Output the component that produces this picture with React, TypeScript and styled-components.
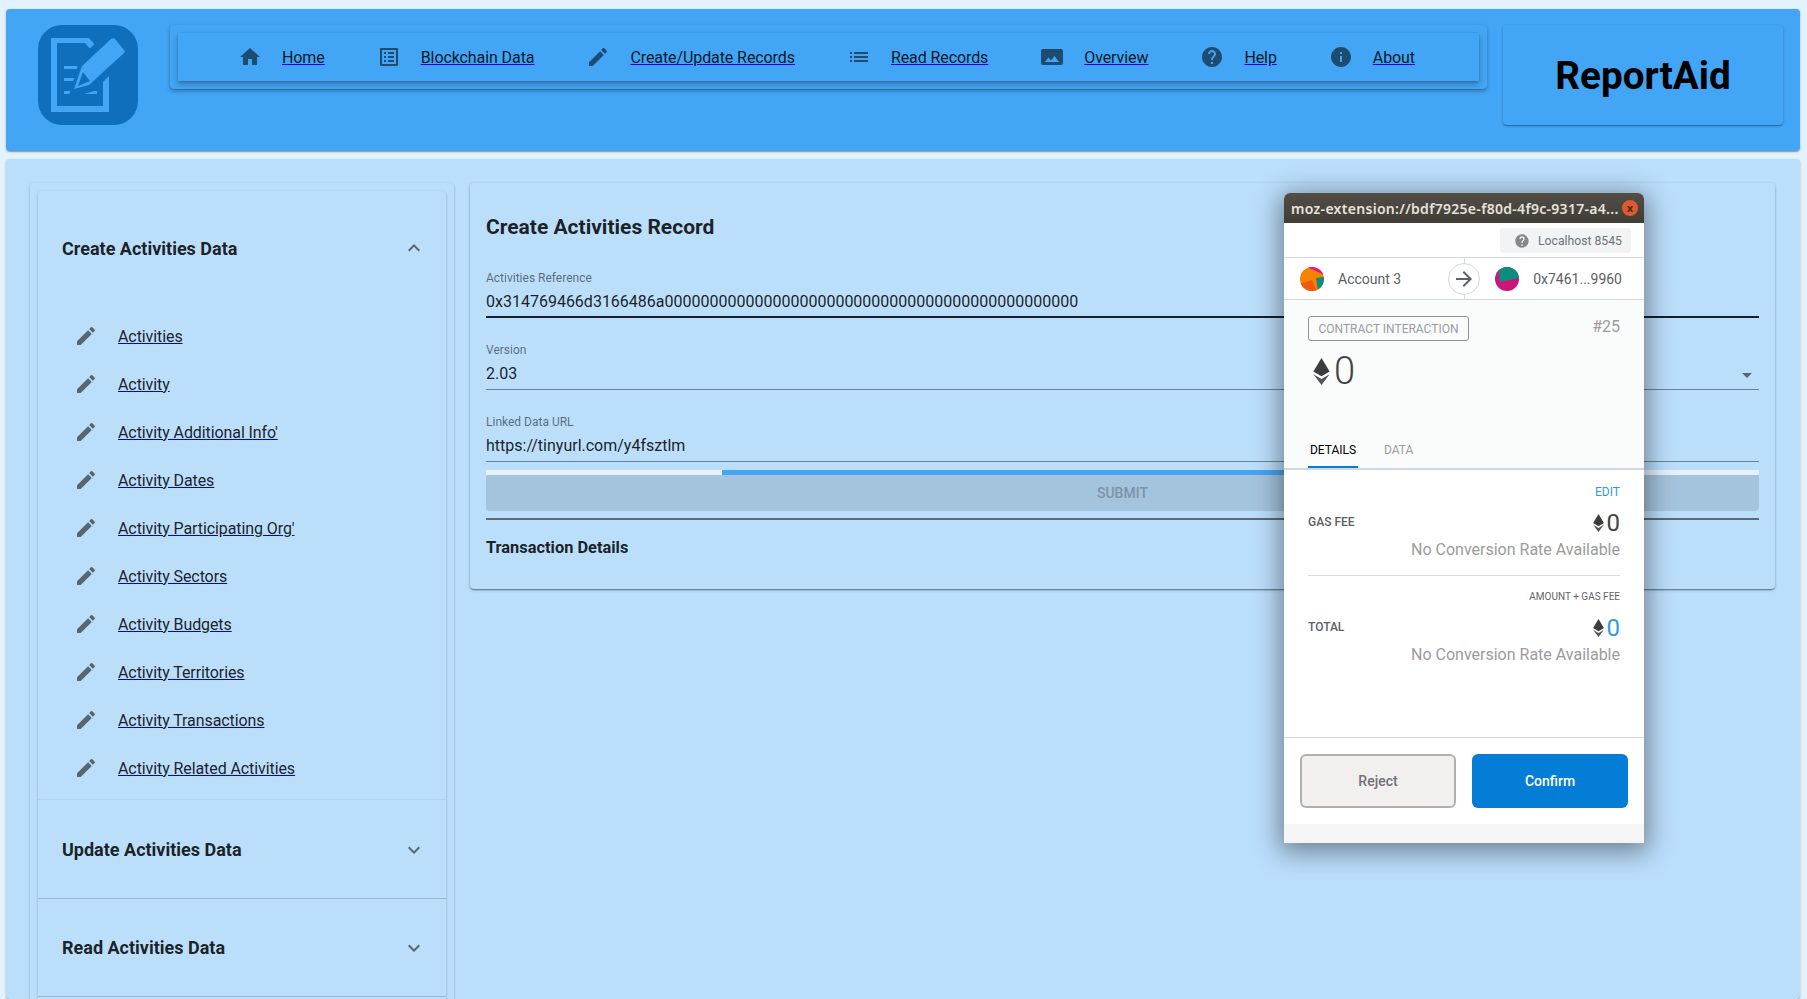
import React from 'react';
import styled, { createGlobalStyle } from 'styled-components';

const GlobalStyle = createGlobalStyle`
  html, body {
    margin: 0;
    height: 100%;
    overflow: hidden;
    background: #e3f2fd;
    font-family: Roboto, "Liberation Sans", sans-serif;
    font-size: 16px;
    color: rgba(0, 0, 0, 0.87);
  }
`;

const elevation = `
  box-shadow: 0 1px 3px 0 rgba(0, 0, 0, 0.2), 0 1px 1px 0 rgba(0, 0, 0, 0.14), 0 2px 1px -1px rgba(0, 0, 0, 0.12);
  border-radius: 4px;
`;

const Page = styled.div`
  position: relative;
  height: 999px;
  overflow: hidden;
  box-sizing: border-box;
  padding: 9px 7px 0 6px;
  display: flex;
  flex-direction: column;
  gap: 8px;
`;

const Header = styled.header`
  ${elevation}
  flex: none;
  height: 142px;
  box-sizing: border-box;
  background: #42a5f5;
  padding: 16px 17px 0 32px;
  display: flex;
  align-items: flex-start;
`;

const Logo = styled.svg`
  flex: none;
  width: 100px;
  height: 100px;
`;

const NavFrame = styled.div`
  ${elevation}
  box-shadow: 0 2px 4px 0 rgba(0, 0, 0, 0.28), 0 1px 1px 0 rgba(0, 0, 0, 0.14);
  flex: none;
  width: 1317px;
  height: 64px;
  margin-left: 32px;
  box-sizing: border-box;
  padding: 8px;
  background: #42a5f5;
`;

const Nav = styled.nav`
  box-shadow: 0 3px 6px 0 rgba(0, 0, 0, 0.28), 0 1px 2px 0 rgba(0, 0, 0, 0.14);
  height: 48px;
  box-sizing: border-box;
  padding: 0 34px;
  display: flex;
  align-items: center;
  white-space: nowrap;
`;

const NavItem = styled.div`
  flex: none;
  display: flex;
  align-items: center;
  padding: 0 26px;
`;

const Icon = styled.svg<{ $tone?: string }>`
  flex: none;
  display: block;
  width: 24px;
  height: 24px;
  fill: ${p => p.$tone || 'rgba(0, 0, 0, 0.54)'};
`;

const NavIcon = styled(Icon)`
  margin-right: 20px;
`;

const Link = styled.a`
  color: #0000ee;
  text-decoration: underline;
  cursor: pointer;
  line-height: 19px;
  letter-spacing: -0.09px;
  span {
    color: rgba(0, 0, 0, 0.87);
  }
`;

const TitleBox = styled.div`
  ${elevation}
  flex: none;
  width: 280px;
  height: 100px;
  margin-left: 16px;
  display: flex;
  align-items: center;
  justify-content: center;
  font-size: 38.7px;
  font-weight: 700;
  color: #000;
`;

const Panel = styled.main`
  ${elevation}
  flex: 1;
  min-height: 0;
  background: #bbdefb;
  padding: 24px 25px 0 24px;
  display: grid;
  grid-template-columns: 424px 1fr;
  column-gap: 16px;
  align-items: start;
`;

const SideFrame = styled.aside`
  ${elevation}
  height: 900px;
  box-sizing: border-box;
  padding: 8px 8px 0;
`;

const SideInner = styled.div`
  ${elevation}
  height: 100%;
`;

const AccordionHead = styled.div<{ $height: number; $rule?: string; $nudge?: number }>`
  height: ${p => p.$height}px;
  box-sizing: border-box;
  padding: ${p => p.$nudge || 0}px 20px 0 24px;
  display: flex;
  align-items: center;
  justify-content: space-between;
  font-size: 18px;
  font-weight: 700;
  color: rgba(0, 0, 0, 0.87);
  border-bottom: ${p => (p.$rule ? `1px solid ${p.$rule}` : 'none')};
`;

const SideList = styled.ul`
  list-style: none;
  margin: 0;
  padding: 7px 0 7px 36px;
  border-bottom: 1px solid rgba(0, 0, 0, 0.05);
`;

const SideRow = styled.li`
  height: 48px;
  display: flex;
  align-items: center;
`;

const SideIcon = styled(Icon)`
  margin-right: 20px;
`;

const Card = styled.section`
  ${elevation}
  box-shadow: 0 1px 3px 0 rgba(0, 0, 0, 0.3), 0 1px 1px 0 rgba(0, 0, 0, 0.14), 0 2px 1px -1px rgba(0, 0, 0, 0.2);
  padding: 32px 16px;
`;

const CardTitle = styled.h2`
  margin: 0 0 7px;
  padding-bottom: 7px;
  font-size: 21px;
  line-height: 24px;
  font-weight: 700;
`;

const Field = styled.div<{ $focused?: boolean }>`
  position: relative;
  margin-top: 25px;
  height: 47px;
  box-sizing: border-box;
  border-bottom: ${p => (p.$focused ? '2px solid #16202a' : '1px solid #6a8296')};
`;

const FieldLabel = styled.div`
  font-size: 12px;
  line-height: 14px;
  color: rgba(0, 0, 0, 0.54);
`;

const FieldValue = styled.div`
  margin-top: 7px;
  font-size: 16px;
  line-height: 19px;
`;

const DropArrow = styled(Icon)`
  position: absolute;
  right: 0;
  top: 20px;
`;

const ProgressTrack = styled.div`
  margin-top: 8px;
  height: 5px;
  background: #e3f2fd;
  display: flex;
`;

const ProgressBar = styled.div`
  margin-left: 236px;
  width: 820px;
  background: #42a5f5;
`;

const SubmitButton = styled.div`
  height: 36px;
  border-radius: 0 0 4px 4px;
  background: #a4c3dc;
  color: #7d94a8;
  font-size: 14px;
  font-weight: 500;
  display: flex;
  align-items: center;
  justify-content: center;
`;

const Rule = styled.hr`
  margin: 7px 0 0;
  border: 0;
  height: 2px;
  background: #5b6a76;
`;

const SectionLabel = styled.div`
  margin-top: 18px;
  font-size: 16.4px;
  line-height: 19px;
  font-weight: 700;
`;

/* the MetaMask window lies on top of the page */
const Popup = styled.div`
  position: absolute;
  left: 1284px;
  top: 193px;
  width: 360px;
  height: 650px;
  display: flex;
  flex-direction: column;
  background: #f5f5f5;
  border-radius: 6px 6px 0 0;
  box-shadow: 0 5px 26px 4px rgba(0, 0, 0, 0.42);
  font-family: Roboto, sans-serif;
`;

const TitleBar = styled.div`
  flex: none;
  height: 30px;
  box-sizing: border-box;
  padding: 0 6px 0 7px;
  border-radius: 6px 6px 0 0;
  background: linear-gradient(#524e46, #403d37);
  display: flex;
  align-items: center;
  justify-content: space-between;
  color: #e6e3dc;
  font-family: "Noto Sans", sans-serif;
  font-size: 14px;
  font-weight: 600;
  letter-spacing: 0.3px;
  white-space: nowrap;
`;

const CloseDot = styled.div`
  flex: none;
  width: 16px;
  height: 16px;
  border-radius: 50%;
  background: #dd5a2b;
  color: #4a2a18;
  font-size: 11px;
  line-height: 15px;
  text-align: center;
  font-weight: 700;
  letter-spacing: 0;
`;

const NetworkRow = styled.div`
  flex: none;
  height: 35px;
  box-sizing: border-box;
  padding: 5px 13px 0 0;
  background: #fff;
  display: flex;
  justify-content: flex-end;
  border-bottom: 1px solid #d2d8dd;
`;

const NetworkPill = styled.div`
  width: 131px;
  height: 25px;
  box-sizing: border-box;
  padding-left: 14px;
  border-radius: 4px;
  background: #f2f3f4;
  display: flex;
  align-items: center;
  gap: 8px;
  font-size: 12.2px;
  color: #6a737d;
`;

const SmallHelp = styled(Icon)`
  width: 16px;
  height: 16px;
`;

const PartyRow = styled.div`
  position: relative;
  flex: none;
  height: 42px;
  box-sizing: border-box;
  background: #fff;
  border-bottom: 1px solid #d2d8dd;
  display: flex;
  align-items: center;
  font-size: 14px;
  color: #5a5f66;
  &::before {
    content: '';
    position: absolute;
    left: 180px;
    top: 0;
    bottom: 0;
    width: 1px;
    background: #d2d8dd;
  }
`;

const Party = styled.div<{ $left: number }>`
  display: flex;
  align-items: center;
  gap: 14px;
  margin-left: ${p => p.$left}px;
`;

const Identicon = styled.svg`
  width: 24px;
  height: 24px;
  border-radius: 50%;
  display: block;
`;

const ArrowBadge = styled.div`
  position: relative;
  width: 32px;
  height: 32px;
  margin-left: 47px;
  box-sizing: border-box;
  border: 1px solid #d2d8dd;
  border-radius: 50%;
  background: #fff;
  display: flex;
  align-items: center;
  justify-content: center;
`;

const Summary = styled.div`
  flex: none;
  height: 170px;
  box-sizing: border-box;
  background: #fafbfb;
  border-bottom: 2px solid #d2d8dd;
  padding: 16px 24px 0;
  display: flex;
  flex-direction: column;
`;

const SummaryTop = styled.div`
  display: flex;
  justify-content: space-between;
  align-items: flex-start;
`;

const TypeTag = styled.div`
  width: 161px;
  height: 25px;
  box-sizing: border-box;
  border: 1px solid #8f9095;
  border-radius: 3px;
  display: flex;
  align-items: center;
  justify-content: center;
  font-size: 12px;
  color: #9a9ca2;
`;

const Nonce = styled.div`
  margin-top: 1px;
  font-size: 16px;
  color: #9b9b9b;
  line-height: 20px;
`;

const Amount = styled.div`
  display: flex;
  align-items: center;
  gap: 4px;
  margin: 12px 0 0 5px;
  font-size: 38px;
  line-height: 36px;
  font-weight: 300;
  color: #444;
`;

const Tabs = styled.div`
  margin-top: auto;
  display: flex;
  gap: 20px;
  font-size: 12px;
`;

const Tab = styled.div<{ $active?: boolean }>`
  width: ${p => (p.$active ? '50px' : 'auto')};
  height: 33px;
  box-sizing: border-box;
  padding-top: 8px;
  text-align: center;
  color: ${p => (p.$active ? '#000' : '#9a9ca2')};
  border-bottom: ${p => (p.$active ? '2px solid #037dd6' : 'none')};
  margin-right: ${p => (p.$active ? '6px' : '0')};
`;

const Details = styled.div`
  flex: none;
  height: 268px;
  box-sizing: border-box;
  background: #fff;
  padding: 14px 24px 0;
  border-bottom: 1px solid #d8dbde;
`;

const RightLine = styled.div<{ $small?: boolean; $blue?: boolean }>`
  text-align: right;
  font-size: ${p => (p.$small ? '10px' : '12px')};
  line-height: 16px;
  color: ${p => (p.$blue ? '#2f9ae0' : '#5f6368')};
`;

const FeeRow = styled.div`
  display: flex;
  justify-content: space-between;
  align-items: center;
  margin-top: 8px;
  height: 28px;
`;

const FeeLabel = styled.div`
  font-size: 12px;
  font-weight: 500;
  color: #5a5f66;
`;

const FeeValue = styled.div<{ $blue?: boolean }>`
  display: flex;
  align-items: center;
  gap: 3px;
  margin-top: 2px;
  font-size: 24px;
  font-weight: 400;
  color: ${p => (p.$blue ? '#2f9ae0' : '#444')};
`;

const Fiat = styled.div`
  margin-top: 2px;
  text-align: right;
  font-size: 16px;
  line-height: 24px;
  color: #9b9b9b;
`;

const FeeDivider = styled.div`
  height: 1px;
  background: #d8dbde;
  margin: 13px 0;
`;

const Footer = styled.div`
  flex: none;
  height: 86px;
  box-sizing: border-box;
  background: #fff;
  padding: 16px 16px 0;
  display: flex;
  gap: 16px;
`;

const ActionButton = styled.div<{ $primary?: boolean }>`
  width: 156px;
  height: 54px;
  box-sizing: border-box;
  border-radius: 6px;
  display: flex;
  align-items: center;
  justify-content: center;
  font-size: 14px;
  font-weight: 500;
  background: ${p => (p.$primary ? '#037dd6' : '#f2f0ef')};
  color: ${p => (p.$primary ? '#fff' : '#6e7175')};
  border: ${p => (p.$primary ? 'none' : '2px solid #b0b0b0')};
`;

const paths = {
  home: 'M10 20v-6h4v6h5v-8h3L12 3 2 12h3v8z',
  grid: 'M19 5v14H5V5h14m1.1-2H3.9c-.5 0-.9.4-.9.9v16.2c0 .4.4.9.9.9h16.2c.4 0 .9-.5.9-.9V3.9c0-.5-.5-.9-.9-.9zM11 7h6v2h-6V7zm0 4h6v2h-6v-2zm0 4h6v2h-6zM7 7h2v2H7zm0 4h2v2H7zm0 4h2v2H7z',
  pencil: 'M3 17.25V21h3.75L17.81 9.94l-3.75-3.75L3 17.25zM20.71 7.04c.39-.39.39-1.02 0-1.41l-2.34-2.34a.9959.9959 0 0 0-1.41 0l-1.83 1.83 3.75 3.75 1.83-1.83z',
  list: 'M3 13h2v-2H3v2zm0 4h2v-2H3v2zm0-8h2V7H3v2zm4 4h14v-2H7v2zm0 4h14v-2H7v2zM7 7v2h14V7H7z',
  panorama: 'M23 18V6c0-1.1-.9-2-2-2H3c-1.1 0-2 .9-2 2v12c0 1.1.9 2 2 2h18c1.1 0 2-.9 2-2zM8.5 12.5l2.5 3.01L14.5 11l4.5 6H5l3.5-4.5z',
  help: 'M12 2C6.48 2 2 6.48 2 12s4.48 10 10 10 10-4.48 10-10S17.52 2 12 2zm1 17h-2v-2h2v2zm2.07-7.75l-.9.92C13.45 12.9 13 13.5 13 15h-2v-.5c0-1.1.45-2.1 1.17-2.83l1.24-1.26c.37-.36.59-.86.59-1.41 0-1.1-.9-2-2-2s-2 .9-2 2H8c0-2.21 1.79-4 4-4s4 1.79 4 4c0 .88-.36 1.68-.93 2.25z',
  info: 'M12 2C6.48 2 2 6.48 2 12s4.48 10 10 10 10-4.48 10-10S17.52 2 12 2zm1 15h-2v-6h2v6zm0-8h-2V7h2v2z',
  more: 'M16.59 8.59L12 13.17 7.41 8.59 6 10l6 6 6-6z',
  less: 'M12 8l-6 6 1.41 1.41L12 10.83l4.59 4.58L18 14z',
  drop: 'M7 10l5 5 5-5z',
};

const navItems = [
  { icon: paths.home, label: 'Home' },
  { icon: paths.grid, label: 'Blockchain Data' },
  { icon: paths.pencil, label: 'Create/Update Records' },
  { icon: paths.list, label: 'Read Records' },
  { icon: paths.panorama, label: 'Overview' },
  { icon: paths.help, label: 'Help' },
  { icon: paths.info, label: 'About' },
];

const sideItems = [
  'Activities',
  'Activity',
  "Activity Additional Info'",
  'Activity Dates',
  "Activity Participating Org'",
  'Activity Sectors',
  'Activity Budgets',
  'Activity Territories',
  'Activity Transactions',
  'Activity Related Activities',
];

const EthIcon = ({ width, height }: { width: number; height: number }) => (
  <svg width={width} height={height} viewBox="0 0 24 40" style={{ display: 'block' }}>
    <path d="M12 0L0 20l12 7 12-7z" fill="#3c3c3d" />
    <path d="M0 24l12 16 12-16-12 7z" fill="#55555a" />
  </svg>
);

const ReportLogo = () => (
  <Logo viewBox="0 0 100 100">
    <rect width="100" height="100" rx="24" fill="#0f6fbd" />
    <path d="M13 13H51L71 36V87H13Z" fill="#42a5f5" />
    <path d="M19 18H47L65 39V81H19Z" fill="#0f6fbd" />
    <path d="M51 23L58 31L51 34Z" fill="#0f6fbd" />
    <path d="M26 41H50V44H26ZM26 53H37V56H26ZM26 66H59V69H26Z" fill="#42a5f5" />
    <path d="M42 33L69 7L93 29L56 66L30 74Z" fill="#0f6fbd" />
    <path d="M36 64L44 41L73 14C74 13 76 13 77 14L86 25C87 26 87 27 86 28L51 60Z" fill="#42a5f5" />
    <path d="M40 61L45 47L52 56Z" fill="#0f6fbd" />
  </Logo>
);

const App = () => (
  <Page>
    <GlobalStyle />
    <Header>
      <ReportLogo />
      <NavFrame>
        <Nav>
          {navItems.map(item => (
            <NavItem key={item.label}>
              <NavIcon viewBox="0 0 24 24">
                <path d={item.icon} />
              </NavIcon>
              <Link>
                <span>{item.label}</span>
              </Link>
            </NavItem>
          ))}
        </Nav>
      </NavFrame>
      <TitleBox>ReportAid</TitleBox>
    </Header>

    <Panel>
      <SideFrame>
        <SideInner>
          <AccordionHead $height={114}>
            Create Activities Data
            <Icon viewBox="0 0 24 24">
              <path d={paths.less} />
            </Icon>
          </AccordionHead>
          <SideList>
            {sideItems.map(item => (
              <SideRow key={item}>
                <SideIcon viewBox="0 0 24 24">
                  <path d={paths.pencil} />
                </SideIcon>
                <Link>
                  <span>{item}</span>
                </Link>
              </SideRow>
            ))}
          </SideList>
          <AccordionHead $height={99} $rule="#9db8cf" $nudge={1}>
            Update Activities Data
            <Icon viewBox="0 0 24 24">
              <path d={paths.more} />
            </Icon>
          </AccordionHead>
          <AccordionHead $height={98} $rule="#9db8cf">
            Read Activities Data
            <Icon viewBox="0 0 24 24">
              <path d={paths.more} />
            </Icon>
          </AccordionHead>
        </SideInner>
      </SideFrame>

      <Card>
        <CardTitle>Create Activities Record</CardTitle>
        <Field $focused>
          <FieldLabel>Activities Reference</FieldLabel>
          <FieldValue>0x314769466d3166486a0000000000000000000000000000000000000000000000</FieldValue>
        </Field>
        <Field>
          <FieldLabel>Version</FieldLabel>
          <FieldValue>2.03</FieldValue>
          <DropArrow viewBox="0 0 24 24">
            <path d={paths.drop} />
          </DropArrow>
        </Field>
        <Field>
          <FieldLabel>Linked Data URL</FieldLabel>
          <FieldValue>https://tinyurl.com/y4fsztlm</FieldValue>
        </Field>
        <ProgressTrack>
          <ProgressBar />
        </ProgressTrack>
        <SubmitButton>SUBMIT</SubmitButton>
        <Rule />
        <SectionLabel>Transaction Details</SectionLabel>
      </Card>
    </Panel>

    <Popup>
      <TitleBar>
        moz-extension://bdf7925e-f80d-4f9c-9317-a4...
        <CloseDot>x</CloseDot>
      </TitleBar>
      <NetworkRow>
        <NetworkPill>
          <SmallHelp viewBox="0 0 24 24" $tone="#86888a">
            <path d={paths.help} />
          </SmallHelp>
          Localhost 8545
        </NetworkPill>
      </NetworkRow>
      <PartyRow>
        <Party $left={16}>
          <Identicon viewBox="0 0 24 24">
            <rect width="24" height="24" fill="#f58200" />
            <path d="M6 0H24V8L14 3Z" fill="#ec1383" />
            <path d="M24 10L16 11L18 24H24Z" fill="#0a8f7e" />
            <path d="M0 17L12 13L17 24H0Z" fill="#f4570c" />
          </Identicon>
          Account 3
        </Party>
        <ArrowBadge>
          <Icon viewBox="0 0 24 24" $tone="#5f6368">
            <path d="M12 4l-1.41 1.41L16.17 11H4v2h12.17l-5.58 5.59L12 20l8-8z" />
          </Icon>
        </ArrowBadge>
        <Party $left={15}>
          <Identicon viewBox="0 0 24 24">
            <rect width="24" height="24" fill="#c9157c" />
            <path d="M3 0H24V11L5 15Z" fill="#0a8f7e" />
            <path d="M0 0H5L3 6H0Z" fill="#e3263a" />
          </Identicon>
          0x7461...9960
        </Party>
      </PartyRow>
      <Summary>
        <SummaryTop>
          <TypeTag>CONTRACT INTERACTION</TypeTag>
          <Nonce>#25</Nonce>
        </SummaryTop>
        <Amount>
          <EthIcon width={17} height={27} />0
        </Amount>
        <Tabs>
          <Tab $active>DETAILS</Tab>
          <Tab>DATA</Tab>
        </Tabs>
      </Summary>
      <Details>
        <RightLine $blue>EDIT</RightLine>
        <FeeRow>
          <FeeLabel>GAS FEE</FeeLabel>
          <FeeValue>
            <EthIcon width={11} height={18} />0
          </FeeValue>
        </FeeRow>
        <Fiat>No Conversion Rate Available</Fiat>
        <FeeDivider />
        <RightLine $small>AMOUNT + GAS FEE</RightLine>
        <FeeRow>
          <FeeLabel>TOTAL</FeeLabel>
          <FeeValue $blue>
            <EthIcon width={11} height={18} />0
          </FeeValue>
        </FeeRow>
        <Fiat>No Conversion Rate Available</Fiat>
      </Details>
      <Footer>
        <ActionButton>Reject</ActionButton>
        <ActionButton $primary>Confirm</ActionButton>
      </Footer>
    </Popup>
  </Page>
);

export default App;
